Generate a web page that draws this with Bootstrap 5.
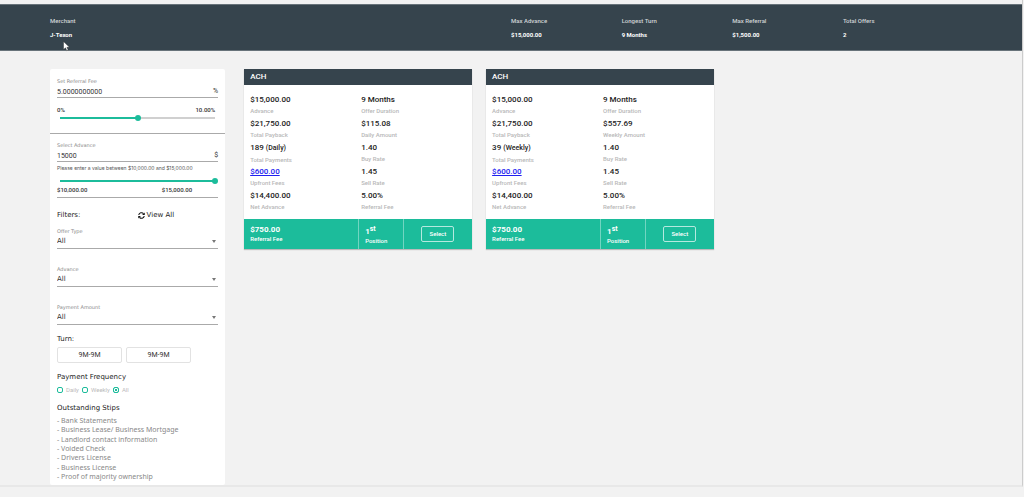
<!DOCTYPE html>
<html lang="en">
<head>
<meta charset="utf-8">
<meta name="viewport" content="width=device-width, initial-scale=1">
<title>Offers</title>
<link href="https://cdn.jsdelivr.net/npm/bootstrap@5.3.0/dist/css/bootstrap.min.css" rel="stylesheet">
<style>
:root{--teal:#1cbc9b;--slate:#36444d}
body{background:#f2f2f2;font-family:Roboto,"Liberation Sans",sans-serif;font-size:6px;line-height:10px;color:#333}
.page-frame{margin-right:1px;padding-top:4px;border-right:1px solid #ccc;border-bottom:2px solid #e8e8e8}
.summary{background:var(--slate);color:#fff;padding:11px 50px 10px;border-top:1px solid #68737a;border-bottom:1px solid #68737a}
.summary dt{font-weight:500;color:#d0d4d6;margin-bottom:4px}
.summary dd{font-weight:700;margin:0}
.sum-main{width:50%}
.sum-item{width:12%}
.pointer{position:absolute;left:13px;top:25px}
.content-area{padding:18px 50px 0;gap:19px}
.filters{width:19%;flex:none;background:#fff;border-radius:2px;font-family:"DejaVu Sans",sans-serif}
.section{padding:7px 7px 4px}
.section-fee{padding-top:8px;padding-bottom:12px;border-bottom:1px solid #aaa}
.tiny{display:block;font-size:5px;line-height:8px;color:#888}
.field{border-bottom:1px solid #aaa}
.entry{font:7px/12px Roboto,sans-serif;color:#333}
.entry input{font:inherit;color:inherit;border:0;padding:1px 0 0;background:transparent;outline:0;min-width:0;height:12px}
.pickers{display:grid;gap:16px}
.drop{position:relative;height:14px}
.drop select{display:block;appearance:none;width:100%;height:13px;border:0;padding:0;background:transparent;outline:0;font:7px/13px "DejaVu Sans",sans-serif;color:#333}
.drop::after{content:"";position:absolute;right:2px;top:5px;border:2px solid transparent;border-top:3px solid #777;border-bottom:0;pointer-events:none}
.slide{display:block;appearance:none;width:100%;height:6px;margin:0;background:linear-gradient(var(--teal),var(--teal)) no-repeat 3px 2px/calc((100% - 6px)*var(--fill)) 2px,linear-gradient(#d0d0d0,#d0d0d0) no-repeat 3px 2px/calc(100% - 6px) 2px}
.slide::-webkit-slider-thumb{appearance:none;width:6px;height:6px;border-radius:50%;background:var(--teal);border:0}
.limits{font:500 6px/8px Roboto,sans-serif;color:#333}
.limits-fee{margin:8px 3px 1px 0}
.limits-adv{padding:2px 0 3px}
.limit-low{width:65%}
.hint{font:5px/8px Inter,sans-serif;color:#555;margin:2px 0 6px;white-space:nowrap}
.title{font-size:7px;line-height:10px;color:#222;margin:9px 0 3px;font-weight:400}
.filter-bar{margin:12px 0 7px}
.filter-bar .title{margin:0}
.plain{display:flex;align-items:center;gap:2px;border:0;background:none;padding:0;font-size:7px;line-height:10px;color:#222}
.turn-btn{width:65px;height:16px;border:1px solid #e2e2e2;border-radius:2px;background:#fff;font:7px/12px Roboto,sans-serif;color:#333;padding:0}
.freq{font:6px/8px Roboto,sans-serif;color:#bbb;gap:3px;padding-top:1px}
.freq input{appearance:none;width:6px;height:6px;border:1px solid var(--teal);border-radius:2px;margin:1px 0}
.freq input:checked{background:var(--teal);box-shadow:inset 0 0 0 1px #fff}
.stips{font:7px/9px "Noto Sans",sans-serif;color:#888;height:65px;margin:0;white-space:nowrap}
.results{padding-right:16px}
.offers{--bs-gutter-x:14px}
.offer{background:#fff;box-shadow:0 1px 1px #bbb}
.offer-head{background:var(--slate);color:#fff;font-size:8px;line-height:16px;font-weight:500;padding-left:6px;margin:0}
.offer-body{padding:8px 0 6px 6px}
.fact{height:24px}
.fact-value{font-size:8px;line-height:13px;font-weight:500;color:#222}
.fact-value small{font-size:7px}
.fact-value a{color:#2020f0}
.fact-label{line-height:9px;font-weight:500;color:#b8b8b8}
.offer-foot{background:var(--teal);color:#fff;height:30px;line-height:9px;font-weight:500}
.foot-fee{width:50%;padding:6px 0 0 6px}
.foot-pos{width:20%;padding:8px 0 0 6px;border-left:1px solid #72d5c1;border-right:1px solid #72d5c1}
.foot-fee strong,.foot-pos strong{display:block;font-size:8px;line-height:9px}
.foot-pos sup{font-size:7px;line-height:0;top:-3px}
.pick{width:33px;height:16px;border:1px solid #b5e9df;border-radius:2px;background:transparent;color:#fff;font-size:6px;font-weight:500;line-height:12px;padding:0}
</style>
</head>
<body>
<div class="page-frame">
  <header class="summary">
    <dl class="d-flex m-0">
      <div class="sum-main position-relative"><dt>Merchant</dt><dd>J-Texon</dd>
        <svg class="pointer" width="8" height="11" viewBox="0 0 8 11" aria-hidden="true"><path d="M.5.5v8l2-1.7 1.3 3 1.4-.6-1.3-2.9h2.6z" fill="#fff" stroke="#222" stroke-width=".4"/></svg>
      </div>
      <div class="sum-item"><dt>Max Advance</dt><dd>$15,000.00</dd></div>
      <div class="sum-item"><dt>Longest Turn</dt><dd>9 Months</dd></div>
      <div class="sum-item"><dt>Max Referral</dt><dd>$1,500.00</dd></div>
      <div class="sum-item"><dt>Total Offers</dt><dd>2</dd></div>
    </dl>
  </header>
  <main class="content-area d-flex align-items-start">
    <form class="filters">
      <div class="section section-fee">
        <label class="tiny" for="fee">Set Referral Fee</label>
        <div class="field entry d-flex justify-content-between"><input id="fee" class="flex-grow-1" value="5.0000000000"><span>%</span></div>
        <div class="limits limits-fee d-flex justify-content-between"><span>0%</span><span>10.00%</span></div>
        <input class="slide" type="range" min="0" max="10" value="5" aria-label="Referral fee" style="--fill:.5">
      </div>
      <div class="section">
        <label class="tiny" for="advance">Select Advance</label>
        <div class="field entry d-flex justify-content-between"><input id="advance" class="flex-grow-1" value="15000"><span>$</span></div>
        <div class="hint">Please enter a value between $10,000.00 and $15,000.00</div>
        <input class="slide" type="range" min="10000" max="15000" value="15000" aria-label="Advance" style="--fill:1">
        <div class="field limits limits-adv d-flex"><span class="limit-low">$10,000.00</span><span>$15,000.00</span></div>
        <div class="filter-bar d-flex">
          <h2 class="title w-50">Filters:</h2>
          <button type="button" class="plain"><svg width="7" height="7" viewBox="0 0 14 14" fill="none" stroke="#111" stroke-width="2.2" aria-hidden="true"><path d="M1.5 6a5.5 5.5 0 0 1 9.6-2.6M12.5 8a5.5 5.5 0 0 1-9.6 2.6"/><path d="M13.5.8v5.4H8.1zM.5 13.2V7.8h5.4z" fill="#111" stroke="none"/></svg>View All</button>
        </div>
        <div class="pickers">
          <div><label class="tiny" for="type">Offer Type</label><div class="field drop"><select id="type"><option>All</option></select></div></div>
          <div><label class="tiny" for="adv">Advance</label><div class="field drop"><select id="adv"><option>All</option></select></div></div>
          <div><label class="tiny" for="amount">Payment Amount</label><div class="field drop"><select id="amount"><option>All</option></select></div></div>
        </div>
        <h2 class="title">Turn:</h2>
        <div class="d-flex gap-1"><button type="button" class="turn-btn">9M-9M</button><button type="button" class="turn-btn">9M-9M</button></div>
        <h2 class="title">Payment Frequency</h2>
        <div class="d-flex freq"><input type="radio" name="freq" id="daily"><label for="daily">Daily</label><input type="radio" name="freq" id="weekly"><label for="weekly">Weekly</label><input type="radio" name="freq" id="every" checked><label for="every">All</label></div>
        <h2 class="title">Outstanding Stips</h2>
        <ul class="stips list-unstyled d-flex flex-column justify-content-between">
          <li>- Bank Statements</li>
          <li>- Business Lease/ Business Mortgage</li>
          <li>- Landlord contact information</li>
          <li>- Voided Check</li>
          <li>- Drivers License</li>
          <li>- Business License</li>
          <li>- Proof of majority ownership</li>
        </ul>
      </div>
    </form>
    <div class="flex-grow-1 results">
      <div class="row row-cols-3 offers">
        <div class="col"><article class="offer">
          <h2 class="offer-head">ACH</h2>
          <div class="offer-body d-flex flex-wrap">
            <div class="fact w-50"><div class="fact-value">$15,000.00</div><div class="fact-label">Advance</div></div>
            <div class="fact w-50"><div class="fact-value">9 Months</div><div class="fact-label">Offer Duration</div></div>
            <div class="fact w-50"><div class="fact-value">$21,750.00</div><div class="fact-label">Total Payback</div></div>
            <div class="fact w-50"><div class="fact-value">$115.08</div><div class="fact-label">Daily Amount</div></div>
            <div class="fact w-50"><div class="fact-value">189 <small>(Daily)</small></div><div class="fact-label">Total Payments</div></div>
            <div class="fact w-50"><div class="fact-value">1.40</div><div class="fact-label">Buy Rate</div></div>
            <div class="fact w-50"><div class="fact-value"><a href="#">$600.00</a></div><div class="fact-label">Upfront Fees</div></div>
            <div class="fact w-50"><div class="fact-value">1.45</div><div class="fact-label">Sell Rate</div></div>
            <div class="fact w-50"><div class="fact-value">$14,400.00</div><div class="fact-label">Net Advance</div></div>
            <div class="fact w-50"><div class="fact-value">5.00%</div><div class="fact-label">Referral Fee</div></div>
          </div>
          <div class="offer-foot d-flex">
            <div class="foot-fee"><strong>$750.00</strong>Referral Fee</div>
            <div class="foot-pos"><strong>1<sup>st</sup></strong>Position</div>
            <div class="flex-grow-1 d-flex align-items-center justify-content-center"><button class="pick" type="button">Select</button></div>
          </div>
        </article></div>
        <div class="col"><article class="offer">
          <h2 class="offer-head">ACH</h2>
          <div class="offer-body d-flex flex-wrap">
            <div class="fact w-50"><div class="fact-value">$15,000.00</div><div class="fact-label">Advance</div></div>
            <div class="fact w-50"><div class="fact-value">9 Months</div><div class="fact-label">Offer Duration</div></div>
            <div class="fact w-50"><div class="fact-value">$21,750.00</div><div class="fact-label">Total Payback</div></div>
            <div class="fact w-50"><div class="fact-value">$557.69</div><div class="fact-label">Weekly Amount</div></div>
            <div class="fact w-50"><div class="fact-value">39 <small>(Weekly)</small></div><div class="fact-label">Total Payments</div></div>
            <div class="fact w-50"><div class="fact-value">1.40</div><div class="fact-label">Buy Rate</div></div>
            <div class="fact w-50"><div class="fact-value"><a href="#">$600.00</a></div><div class="fact-label">Upfront Fees</div></div>
            <div class="fact w-50"><div class="fact-value">1.45</div><div class="fact-label">Sell Rate</div></div>
            <div class="fact w-50"><div class="fact-value">$14,400.00</div><div class="fact-label">Net Advance</div></div>
            <div class="fact w-50"><div class="fact-value">5.00%</div><div class="fact-label">Referral Fee</div></div>
          </div>
          <div class="offer-foot d-flex">
            <div class="foot-fee"><strong>$750.00</strong>Referral Fee</div>
            <div class="foot-pos"><strong>1<sup>st</sup></strong>Position</div>
            <div class="flex-grow-1 d-flex align-items-center justify-content-center"><button class="pick" type="button">Select</button></div>
          </div>
        </article></div>
      </div>
    </div>
  </main>
</div>
<script src="https://cdn.jsdelivr.net/npm/bootstrap@5.3.0/dist/js/bootstrap.bundle.min.js"></script>
</body>
</html>
